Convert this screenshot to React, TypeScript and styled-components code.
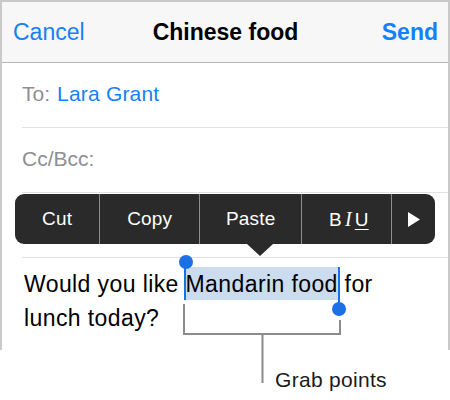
import React from "react";
import styled, { createGlobalStyle } from "styled-components";

const GlobalStyle = createGlobalStyle`
  html, body { margin: 0; padding: 0; background: #ffffff; }
  body { font-family: "Liberation Sans", Arial, sans-serif; }
`;

const BLUE = "#167ffb";
const HANDLE = "#1b70e4";

const Page = styled.div`
  position: relative;
  width: 450px;
  height: 400px;
  background: #ffffff;
  overflow: hidden;
`;

const Phone = styled.div`
  box-sizing: border-box;
  height: 350px;
  border: 2px solid #c9c9c9;
  border-bottom: none;
  display: flex;
  flex-direction: column;
`;

const Header = styled.div`
  display: grid;
  grid-template-columns: 1fr auto 1fr;
  align-items: center;
  height: 60px;
  padding: 0 10px 0 11px;
  background: #f7f7f7;
  border-bottom: 1px solid #b5b5b5;
  font-size: 23px;
  line-height: 23px;
`;

const NavButton = styled.span<{ $bold?: boolean; $end?: boolean }>`
  color: ${BLUE};
  font-weight: ${(p) => (p.$bold ? 700 : 400)};
  justify-self: ${(p) => (p.$end ? "end" : "start")};
`;

const Title = styled.span`
  color: #000000;
  font-weight: 700;
`;

const FieldRow = styled.div`
  box-sizing: border-box;
  height: 65px;
  margin-left: 20px;
  padding-bottom: 3px;
  display: flex;
  align-items: center;
  gap: 7px;
  border-bottom: 1px solid #e1e1e1;
  font-size: 21px;
  line-height: 21px;
`;

const FieldLabel = styled.span`
  color: #8e8e93;
`;

const FieldValue = styled.span`
  color: ${BLUE};
  letter-spacing: 0.2px;
`;

const Body = styled.div`
  padding: 9px 0 0 22px;
  font-size: 23px;
  line-height: 34px;
  letter-spacing: 0.4px;
  color: #000000;
`;

const Selection = styled.span`
  position: relative;
  background: #cbdcee;
  padding: 4px 0 3px;
`;

const HandleLine = styled.span<{ $side: "start" | "end" }>`
  position: absolute;
  width: 2px;
  background: ${HANDLE};
  top: 0;
  ${(p) => (p.$side === "start" ? "left: -2px; bottom: 0;" : "right: -2px; bottom: -4px;")}
`;

const HandleKnob = styled.span<{ $side: "start" | "end" }>`
  position: absolute;
  width: 14px;
  height: 14px;
  border-radius: 50%;
  background: ${HANDLE};
  ${(p) =>
    p.$side === "start"
      ? "left: -7px; top: -12px;"
      : "right: -8px; bottom: -16px;"}
`;

const Toolbar = styled.div`
  position: absolute;
  left: 15px;
  top: 194px;
  width: 420px;
  height: 50px;
  display: flex;
  background: #2a2a2a;
  border-radius: 9px;
  color: #ffffff;
  font-size: 19px;
  letter-spacing: 0.2px;
`;

const ToolItem = styled.div<{ $w: number }>`
  width: ${(p) => p.$w}px;
  display: flex;
  align-items: center;
  justify-content: center;
  & + & {
    border-left: 1px solid #8d8d8d;
  }
`;

const Arrow = styled.div`
  position: absolute;
  left: 232px;
  top: 50px;
  width: 0;
  height: 0;
  border-left: 13px solid transparent;
  border-right: 13px solid transparent;
  border-top: 12px solid #2a2a2a;
`;

const FormatGroup = styled.span`
  display: flex;
  align-items: baseline;
  gap: 3px;
  font-size: 19px;
  margin-left: 4px;
`;

const Bold = styled.span`
  font-weight: 400;
`;

const Italic = styled.span`
  font-family: "Liberation Serif", "Times New Roman", serif;
  font-style: italic;
  font-size: 20px;
`;

const Under = styled.span`
  text-decoration: underline;
  text-underline-offset: 3px;
  text-decoration-thickness: 1px;
`;

const Callout = styled.svg`
  position: absolute;
  left: 0;
  top: 0;
  pointer-events: none;
`;

const CalloutLabel = styled.span`
  position: absolute;
  left: 275px;
  top: 368px;
  font-size: 21px;
  line-height: 24px;
  letter-spacing: 0.3px;
  color: #1a1a1a;
`;

export default function App() {
  return (
    <Page>
      <GlobalStyle />
      <Phone>
        <Header>
          <NavButton>Cancel</NavButton>
          <Title>Chinese food</Title>
          <NavButton $bold $end>
            Send
          </NavButton>
        </Header>
        <FieldRow>
          <FieldLabel>To:</FieldLabel>
          <FieldValue>Lara Grant</FieldValue>
        </FieldRow>
        <FieldRow>
          <FieldLabel>Cc/Bcc:</FieldLabel>
        </FieldRow>
        <FieldRow />
        <Body>
          Would you like{" "}
          <Selection>
            <HandleLine $side="start" />
            <HandleKnob $side="start" />
            Mandarin food
            <HandleLine $side="end" />
            <HandleKnob $side="end" />
          </Selection>{" "}
          for
          <br />
          lunch today?
        </Body>
      </Phone>
      <Toolbar>
        <ToolItem $w={85}>Cut</ToolItem>
        <ToolItem $w={100}>Copy</ToolItem>
        <ToolItem $w={102}>Paste</ToolItem>
        <ToolItem $w={90}>
          <FormatGroup>
            <Bold>B</Bold>
            <Italic>I</Italic>
            <Under>U</Under>
          </FormatGroup>
        </ToolItem>
        <ToolItem $w={43}>
          <svg width="12" height="15" viewBox="0 0 12 15">
            <polygon points="0,0 12,7.5 0,15" fill="#ffffff" />
          </svg>
        </ToolItem>
        <Arrow />
      </Toolbar>
      <Callout width="450" height="400" viewBox="0 0 450 400">
        <path
          d="M184 304 V334 H340 V320 M262.5 334 V383"
          fill="none"
          stroke="#8b8b8b"
          strokeWidth="2"
        />
      </Callout>
      <CalloutLabel>Grab points</CalloutLabel>
    </Page>
  );
}
